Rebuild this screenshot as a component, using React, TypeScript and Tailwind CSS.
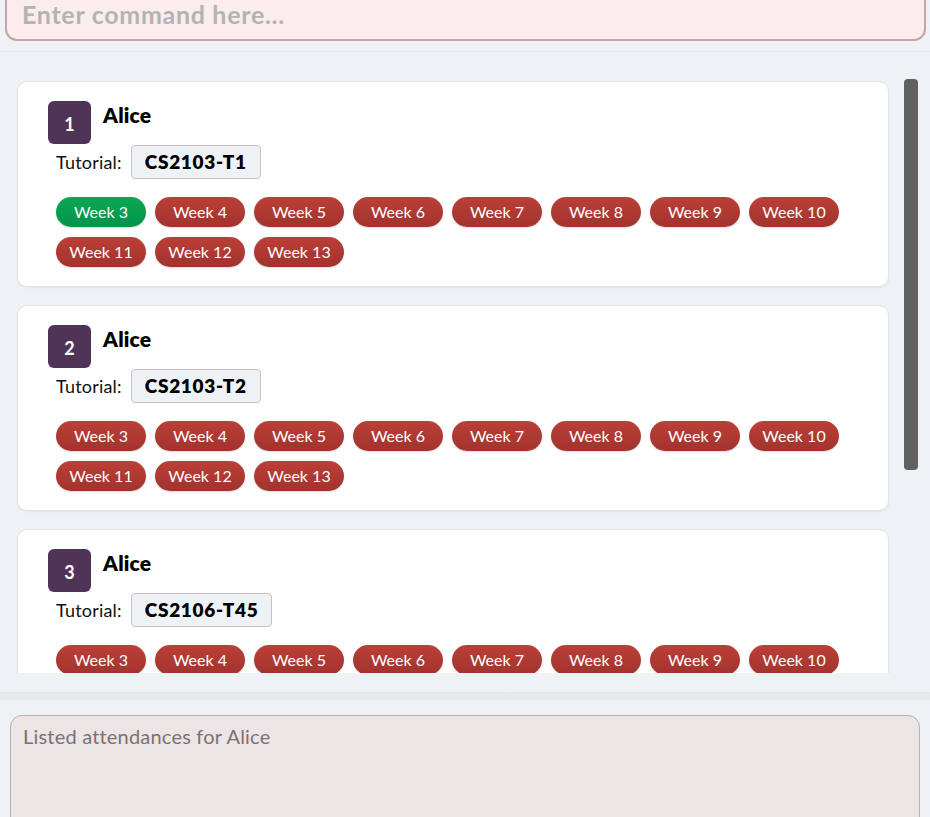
import React from "react";

const people = [
  { id: 1, name: "Alice", tut: "CS2103-T1", present: [3] },
  { id: 2, name: "Alice", tut: "CS2103-T2", present: [] as number[] },
  { id: 3, name: "Alice", tut: "CS2106-T45", present: [] as number[] },
];
const weeks = [3, 4, 5, 6, 7, 8, 9, 10, 11, 12, 13];

function Card({ p }: { p: (typeof people)[number] }) {
  return (
    <div className="w-[872px] shrink-0 rounded-[10px] border border-[#e2e4e6] bg-white pt-[19px] pb-[19px] pl-[30px] pr-[20px] shadow-[0_1px_2px_rgba(0,0,0,0.06)]">
      <div className="flex items-start gap-[12px]">
        <div className="flex h-[43px] w-[43px] items-center justify-center rounded-[6px] bg-[#4f3457] pt-[3px] text-[18px] font-bold text-white">
          {p.id}
        </div>
        <div className="mt-[1px] text-[21px] font-extrabold leading-[26px] tracking-[0.2px] text-black">{p.name}</div>
      </div>
      <div className="mt-[1px] flex items-center gap-[9px] pl-[8px]">
        <span className="text-[18px] tracking-[0.2px] text-[#111]">Tutorial:</span>
        <span className="flex h-[34px] items-center rounded-[4px] border border-[#d7b8bc] bg-[#eef2f5] px-[13px] text-[19px] font-extrabold tracking-[0.7px] text-black">
          {p.tut}
        </span>
      </div>
      <div className="mt-[18px] flex flex-wrap gap-x-[9px] gap-y-[10px] pl-[8px]">
        {weeks.map((w) => {
          const ok = p.present.includes(w);
          return (
            <span
              key={w}
              className={
                ok
                  ? "flex h-[30px] w-[90px] items-center justify-center rounded-full bg-gradient-to-b from-[#0aa852] to-[#03934a] text-[16px] text-white shadow-[0_1px_2px_rgba(0,0,0,0.15)]"
                  : "flex h-[30px] w-[90px] items-center justify-center rounded-full bg-gradient-to-b from-[#bb3f37] to-[#a2332e] text-[16px] text-white shadow-[0_1px_2px_rgba(0,0,0,0.15)]"
              }
            >
              Week {w}
            </span>
          );
        })}
      </div>
    </div>
  );
}

export default function App() {
  return (
    <div
      className="flex h-[817px] w-[930px] flex-col overflow-hidden bg-[#eef2f5]"
      style={{ fontFamily: "Lato, 'Open Sans', sans-serif" }}
    >
      <div className="h-[52px] shrink-0 border-b border-[#e6eaee] px-[5px]">
        <div className="-mt-[12px] flex h-[53px] w-[921px] items-start rounded-[12px] border-2 border-[#c5a5a6] bg-[#fbeced] pl-[15px] pt-[9px]">
          <span className="text-[25px] font-bold leading-[30px] tracking-[0.7px] text-[#b3b3b3]">Enter command here...</span>
        </div>
      </div>
      <div className="relative h-[621px] shrink-0 overflow-hidden">
        <div className="flex flex-col gap-[18px] pl-[17px] pt-[29px]">
          {people.map((p) => (
            <Card key={p.id} p={p} />
          ))}
        </div>
        <div className="absolute left-[904px] top-[27px] h-[391px] w-[14px] rounded-[4px] bg-[#616161]" />
      </div>
      <div className="h-[19px] shrink-0" />
      <div className="h-[8px] shrink-0 bg-gradient-to-b from-[#e3e5e7] to-[#eaecee]" />
      <div className="h-[15px] shrink-0" />
      <div className="mx-[10px] h-[140px] shrink-0 rounded-[12px] border border-[#c8aaab] bg-[#ebe5e5] px-[12px] pt-[5px]">
        <span className="text-[20px] tracking-[0.2px] text-[#806f74]">Listed attendances for Alice</span>
      </div>
    </div>
  );
}
